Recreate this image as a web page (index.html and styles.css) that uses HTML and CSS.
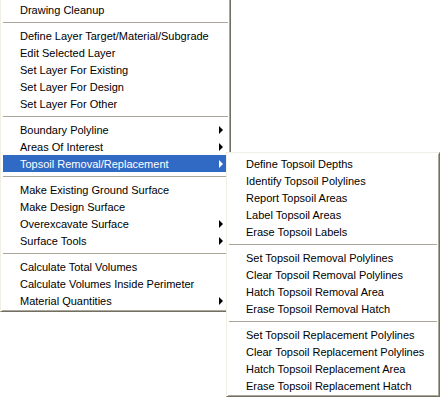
FILE: index.html
```html
<!DOCTYPE html>
<html>
<head>
<meta charset="utf-8">
<link rel="stylesheet" href="styles.css">
</head>
<body>
<div class="menu main">
  <div class="item">Drawing Cleanup</div>
  <div class="sep"></div>
  <div class="item">Define Layer Target/Material/Subgrade</div>
  <div class="item">Edit Selected Layer</div>
  <div class="item">Set Layer For Existing</div>
  <div class="item">Set Layer For Design</div>
  <div class="item">Set Layer For Other</div>
  <div class="sep"></div>
  <div class="item"><span class="label">Boundary Polyline</span><span class="arrow"></span></div>
  <div class="item"><span class="label">Areas Of Interest</span><span class="arrow"></span></div>
  <div class="item active"><span class="label">Topsoil Removal/Replacement</span><span class="arrow"></span>
    <div class="menu sub">
      <div class="item">Define Topsoil Depths</div>
      <div class="item">Identify Topsoil Polylines</div>
      <div class="item">Report Topsoil Areas</div>
      <div class="item">Label Topsoil Areas</div>
      <div class="item">Erase Topsoil Labels</div>
      <div class="sep"></div>
      <div class="item">Set Topsoil Removal Polylines</div>
      <div class="item">Clear Topsoil Removal Polylines</div>
      <div class="item">Hatch Topsoil Removal Area</div>
      <div class="item">Erase Topsoil Removal Hatch</div>
      <div class="sep"></div>
      <div class="item">Set Topsoil Replacement Polylines</div>
      <div class="item">Clear Topsoil Replacement Polylines</div>
      <div class="item">Hatch Topsoil Replacement Area</div>
      <div class="item">Erase Topsoil Replacement Hatch</div>
    </div>
  </div>
  <div class="sep"></div>
  <div class="item">Make Existing Ground Surface</div>
  <div class="item">Make Design Surface</div>
  <div class="item"><span class="label">Overexcavate Surface</span><span class="arrow"></span></div>
  <div class="item"><span class="label">Surface Tools</span><span class="arrow"></span></div>
  <div class="sep"></div>
  <div class="item">Calculate Total Volumes</div>
  <div class="item">Calculate Volumes Inside Perimeter</div>
  <div class="item"><span class="label">Material Quantities</span><span class="arrow"></span></div>
</div>
</body>
</html>
```

FILE: styles.css
```css
html, body {
  margin: 0;
  padding: 0;
  background: #ffffff;
  width: 440px;
  height: 399px;
  overflow: hidden;
}

body {
  font-family: "Liberation Sans", Arial, sans-serif;
  font-size: 11px;
  color: #000000;
}

.menu {
  box-sizing: border-box;
  background: #ffffff;
  border: 1px solid;
  border-color: #f1efe2 #716f64 #716f64 #f1efe2;
  box-shadow: inset 1px 1px 0 #ffffff, inset -1px -1px 0 #aca899;
  padding: 2px;
}

.main {
  width: 231px;
  margin-top: -2px;
}

.sub {
  position: absolute;
  left: calc(100% - 2px);
  top: -3px;
  width: 214px;
  color: #000000;
}

.item {
  position: relative;
  box-sizing: border-box;
  display: flex;
  align-items: center;
  height: 17px;
  line-height: 15px;
  padding: 2px 0 0 17px;
  white-space: nowrap;
}

.label {
  flex: 1;
}

.arrow {
  width: 0;
  height: 0;
  margin: -2px 5px 0 0;
  border-left: 4px solid #000000;
  border-top: 4px solid transparent;
  border-bottom: 4px solid transparent;
}

.active {
  background: #316ac5;
  color: #ffffff;
}

.active > .arrow {
  border-left-color: #ffffff;
}

.sep {
  height: 1px;
  margin: 4px 0 4px;
  background: #aca899;
}
```
